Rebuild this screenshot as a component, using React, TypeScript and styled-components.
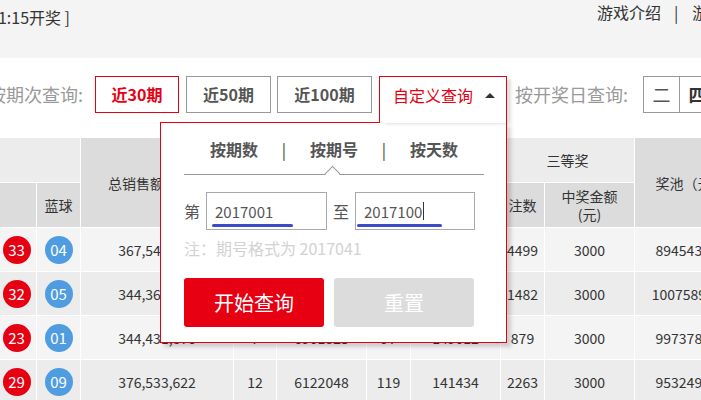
import styled, { createGlobalStyle } from "styled-components";

const GlobalStyle = createGlobalStyle`
  html, body {
    margin: 0;
    padding: 0;
    background: #fff;
  }
  body {
    width: 701px;
    height: 400px;
    overflow: hidden;
    font-family: "Microsoft YaHei", "Noto Sans CJK SC", sans-serif;
    color: #333;
  }
`;

const Page = styled.div`
  width: 701px;
  overflow: hidden;
`;

const TopBar = styled.div`
  display: flex;
  height: 58px;
  background: #f4f4f4;
  font-size: 16px;
`;

const DrawTime = styled.div`
  width: 70px;
  flex-shrink: 0;
  display: flex;
  justify-content: flex-end;
  overflow: hidden;
  white-space: nowrap;
  padding-top: 6px;
  line-height: 22px;
`;

const TopLinks = styled.div`
  flex-shrink: 0;
  margin-left: 527px;
  padding-top: 1px;
  line-height: 22px;
  white-space: nowrap;
`;

const LinkSep = styled.span`
  margin: 0 14px 0 13px;
`;

const QueryBar = styled.div`
  display: flex;
  align-items: flex-start;
  margin-top: 18px;
  height: 37px;
  white-space: nowrap;
`;

const QueryLabel = styled.div<{ $width?: number; $gap: number }>`
  flex-shrink: 0;
  ${(p) => (p.$width ? `width: ${p.$width}px;` : "")}
  display: flex;
  justify-content: flex-end;
  overflow: hidden;
  font-size: 18px;
  line-height: 37px;
  color: #999;
  margin-right: ${(p) => p.$gap}px;
`;

const PeriodButton = styled.div<{ $active?: boolean; $width: number; $gap: number }>`
  flex-shrink: 0;
  box-sizing: border-box;
  width: ${(p) => p.$width}px;
  height: 37px;
  margin-right: ${(p) => p.$gap}px;
  border: 1px solid ${(p) => (p.$active ? "#e60012" : "#999")};
  background: #fff;
  color: ${(p) => (p.$active ? "#e60012" : "#555")};
  font-size: 16px;
  font-weight: bold;
  line-height: 35px;
  text-align: center;
`;

const Dropdown = styled.div`
  position: relative;
  flex-shrink: 0;
  margin-right: 8px;
`;

const DropButton = styled.div`
  position: relative;
  z-index: 2;
  box-sizing: border-box;
  width: 128px;
  height: 47px;
  display: flex;
  align-items: flex-start;
  justify-content: space-between;
  padding: 0 11px 0 13px;
  border: 1px solid #e60012;
  border-bottom: none;
  background: #fff;
  color: #e60012;
  font-size: 16px;
  line-height: 36px;
  box-shadow: 5px 2px 3px -1px rgba(0, 0, 0, 0.12);
`;

const ArrowUp = styled.span`
  width: 0;
  height: 0;
  margin-top: 16px;
  border-left: 5px solid transparent;
  border-right: 5px solid transparent;
  border-bottom: 5px solid #333;
`;

const Popup = styled.div`
  position: absolute;
  z-index: 1;
  top: 46px;
  right: 0;
  width: 347px;
  box-sizing: border-box;
  padding: 14px 22px 15px 23px;
  border: 1px solid #e60012;
  background: #fff;
  box-shadow: 4px 4px 4px rgba(0, 0, 0, 0.16);
`;

const Tabs = styled.div`
  display: flex;
  height: 24px;
  line-height: 24px;
  font-size: 16px;
  font-weight: bold;
  color: #555;
`;

const Tab = styled.div`
  flex: 1;
  text-align: center;
`;

const TabSep = styled.div`
  width: 0;
  display: flex;
  justify-content: center;
  font-weight: normal;
  color: #444;
`;

const Divider = styled.div`
  position: relative;
  margin-top: 13px;
  height: 1px;
  background: #999;

  &::after {
    content: "";
    position: absolute;
    left: 143px;
    top: -6px;
    width: 11px;
    height: 11px;
    box-sizing: border-box;
    border-top: 1px solid #999;
    border-left: 1px solid #999;
    background: #fff;
    transform: rotate(45deg);
  }
`;

const RangeRow = styled.div`
  display: flex;
  align-items: center;
  gap: 6px;
  margin-top: 17px;
  font-size: 16px;
  color: #555;
`;

const InputBox = styled.div<{ $width: number }>`
  position: relative;
  box-sizing: border-box;
  width: ${(p) => p.$width}px;
  height: 38px;
  display: flex;
  align-items: center;
  padding-left: 8px;
  border: 1px solid #aaa;
  font-size: 15px;
  color: #555;
`;

const Caret = styled.span`
  width: 1px;
  height: 18px;
  margin-left: 1px;
  background: #333;
`;

const InkMark = styled.span<{ $left: number; $width: number }>`
  position: absolute;
  left: ${(p) => p.$left}px;
  bottom: 2px;
  width: ${(p) => p.$width}px;
  height: 3px;
  border-radius: 2px;
  background: #3d4bc9;
`;

const Note = styled.div`
  margin-top: 8px;
  line-height: 20px;
  font-size: 16px;
  color: #d2d2d2;
`;

const Actions = styled.div`
  display: flex;
  gap: 10px;
  margin-top: 20px;
`;

const ActionButton = styled.div<{ $primary?: boolean }>`
  width: 140px;
  height: 49px;
  border-radius: 3px;
  background: ${(p) => (p.$primary ? "#e60012" : "#dcdcdc")};
  color: #fff;
  font-size: 20px;
  line-height: 49px;
  text-align: center;
`;

const DayBox = styled.div<{ $strong?: boolean }>`
  flex-shrink: 0;
  box-sizing: border-box;
  width: 37px;
  height: 37px;
  margin-right: -1px;
  border: 1px solid #999;
  font-size: 18px;
  line-height: 35px;
  text-align: center;
  color: ${(p) => (p.$strong ? "#333" : "#555")};
  font-weight: ${(p) => (p.$strong ? "bold" : "normal")};
`;

const TableWrap = styled.div`
  margin-top: 24px;
  width: 701px;
  overflow: hidden;
`;

const Table = styled.table`
  margin-left: -4px;
  width: 750px;
  table-layout: fixed;
  border-collapse: collapse;
  font-size: 14px;
  color: #333;
`;

const Th = styled.th<{ $group?: boolean }>`
  height: 44px;
  padding: 0;
  border: 1px solid #fff;
  font-weight: normal;
  line-height: 18px;
  background: ${(p) => (p.$group ? "#ececec" : "#dcdcdc")};
`;

const Tr = styled.tr<{ $alt?: boolean }>`
  background: ${(p) => (p.$alt ? "#ececec" : "#f4f4f4")};
`;

const Td = styled.td`
  height: 43px;
  padding: 0;
  border: 1px solid #fff;
  text-align: center;
  white-space: nowrap;
`;

const Ball = styled.span<{ $blue?: boolean }>`
  display: inline-block;
  width: 28px;
  height: 28px;
  border-radius: 50%;
  background: ${(p) => (p.$blue ? "#4f9de0" : "#e60012")};
  color: #fff;
  font-size: 15px;
  line-height: 28px;
  text-align: center;
  vertical-align: middle;
`;

const widths = [40, 44, 153, 43, 90, 44, 90, 44, 90, 112];

const rows = [
  ["33", "04", "367,543,218", "9", "6543120", "102", "152371", "4499", "3000", "894543216"],
  ["32", "05", "344,362,104", "6", "7820914", "88", "168820", "1482", "3000", "1007589433"],
  ["23", "01", "344,431,876", "7", "6901325", "97", "149012", "879", "3000", "997378215"],
  ["29", "09", "376,533,622", "12", "6122048", "119", "141434", "2263", "3000", "953249107"],
];

const App = () => {
  return (
    <Page>
      <GlobalStyle />
      <TopBar>
        <DrawTime>[ 每周二、四、日21:15开奖 ]</DrawTime>
        <TopLinks>
          游戏介绍<LinkSep>|</LinkSep>游戏规则
        </TopLinks>
      </TopBar>

      <QueryBar>
        <QueryLabel $width={83} $gap={12}>
          按期次查询:
        </QueryLabel>
        <PeriodButton $active $width={84} $gap={7}>
          近30期
        </PeriodButton>
        <PeriodButton $width={85} $gap={6}>
          近50期
        </PeriodButton>
        <PeriodButton $width={95} $gap={7}>
          近100期
        </PeriodButton>
        <Dropdown>
          <DropButton>
            自定义查询
            <ArrowUp />
          </DropButton>
          <Popup>
            <Tabs>
              <Tab>按期数</Tab>
              <TabSep>|</TabSep>
              <Tab>按期号</Tab>
              <TabSep>|</TabSep>
              <Tab>按天数</Tab>
            </Tabs>
            <Divider />
            <RangeRow>
              第
              <InputBox $width={121}>
                2017001
                <InkMark $left={5} $width={81} />
              </InputBox>
              至
              <InputBox $width={120}>
                2017100
                <Caret />
                <InkMark $left={1} $width={85} />
              </InputBox>
            </RangeRow>
            <Note>注：期号格式为 2017041</Note>
            <Actions>
              <ActionButton $primary>开始查询</ActionButton>
              <ActionButton>重置</ActionButton>
            </Actions>
          </Popup>
        </Dropdown>
        <QueryLabel $gap={15}>按开奖日查询:</QueryLabel>
        <DayBox>二</DayBox>
        <DayBox $strong>四</DayBox>
        <DayBox>日</DayBox>
      </QueryBar>

      <TableWrap>
        <Table>
          <colgroup>
            {widths.map((w, i) => (
              <col key={i} style={{ width: w }} />
            ))}
          </colgroup>
          <thead>
            <tr>
              <Th $group colSpan={2} />
              <Th rowSpan={2}>总销售额（元）</Th>
              <Th $group colSpan={2}>
                一等奖
              </Th>
              <Th $group colSpan={2}>
                二等奖
              </Th>
              <Th $group colSpan={2}>
                三等奖
              </Th>
              <Th rowSpan={2}>奖池（元）</Th>
            </tr>
            <tr>
              <Th />
              <Th>蓝球</Th>
              <Th>注数</Th>
              <Th>
                中奖金额
                <br />
                (元)
              </Th>
              <Th>注数</Th>
              <Th>
                中奖金额
                <br />
                (元)
              </Th>
              <Th>注数</Th>
              <Th>
                中奖金额
                <br />
                (元)
              </Th>
            </tr>
          </thead>
          <tbody>
            {rows.map((r, i) => (
              <Tr key={i} $alt={i % 2 === 1}>
                <Td>
                  <Ball>{r[0]}</Ball>
                </Td>
                <Td>
                  <Ball $blue>{r[1]}</Ball>
                </Td>
                {r.slice(2).map((v, j) => (
                  <Td key={j}>{v}</Td>
                ))}
              </Tr>
            ))}
          </tbody>
        </Table>
      </TableWrap>
    </Page>
  );
};

export default App;
